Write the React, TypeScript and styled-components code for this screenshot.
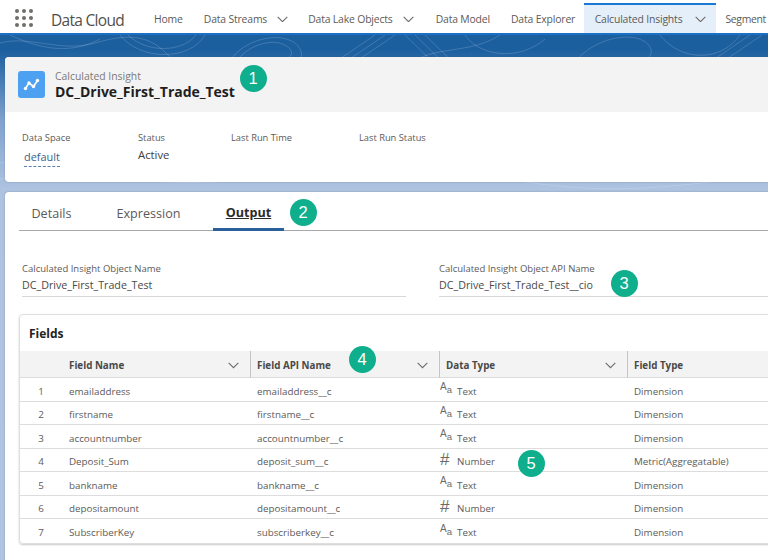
import React from "react";
import styled, { createGlobalStyle } from "styled-components";

const Global = createGlobalStyle`
  html, body { margin: 0; padding: 0; background: #fff; }
  * { box-sizing: border-box; }
`;

const Page = styled.div`
  position: relative;
  width: 768px;
  height: 560px;
  overflow: hidden;
  display: flex;
  flex-direction: column;
  font-family: "Open Sans", "Noto Sans", sans-serif;
  color: #3e3e3c;
  background: linear-gradient(180deg, #1c5f9f 0px, #1c5f9f 50px, #7fa2cf 120px, #aec3e0 190px, #b0c5e1 560px);
`;

const Topo = styled.svg`
  position: absolute;
  left: 0;
  top: 35px;
  width: 768px;
  height: 160px;
  pointer-events: none;
`;

const Nav = styled.header`
  position: relative;
  flex: none;
  height: 35px;
  background: #fff;
  border-bottom: 2px solid #1b6fc4;
  display: flex;
  align-items: stretch;
  white-space: nowrap;
  overflow: hidden;
`;

const Launcher = styled.div`
  width: 18px;
  height: 18px;
  margin: 9px 0 0 15px;
  display: grid;
  grid-template-columns: repeat(3, 4px);
  grid-auto-rows: 4px;
  gap: 3px;
  flex: none;
`;

const Dot = styled.i`
  display: block;
  width: 4px;
  height: 4px;
  border-radius: 50%;
  background: #706e6b;
`;

const AppName = styled.div`
  font-size: 15.5px;
  line-height: 33px;
  padding-top: 4px;
  color: #514f4d;
  margin: 0 19.5px 0 18px;
  letter-spacing: -0.7px;
  flex: none;
`;

const NavItem = styled.div<{ $right?: number; $gap?: number }>`
  flex: none;
  display: flex;
  align-items: center;
  gap: ${(p) => p.$gap ?? 10}px;
  height: 33px;
  padding: 5px ${(p) => p.$right ?? 10.5}px 0 10.5px;
  font-size: 10.4px;
  letter-spacing: -0.16px;
  color: #5c5a58;
`;

const ActiveNavItem = styled(NavItem)`
  height: 30px;
  margin-top: 3px;
  padding: 0 10px 0 11px;
  background: #e5eff9;
  border-top: 2px solid #1b78d4;
`;

const ClippedNavItem = styled(NavItem)`
  padding-left: 9px;
  padding-right: 0;
  letter-spacing: -0.3px;
`;

const Card = styled.section`
  position: relative;
  margin-left: 5px;
  width: 800px;
  background: #fff;
  border-radius: 4px 0 0 4px;
  box-shadow: 0 0 2px rgba(60, 70, 90, 0.35);
  flex: none;
`;

const HighlightCard = styled(Card)`
  margin-top: 22px;
  height: 125px;
`;

const RecordHead = styled.div`
  height: 55px;
  background: #f3f3f3;
  border-radius: 4px 0 0 0;
  display: flex;
  align-items: center;
  padding: 0 0 1px 13px;
  gap: 10px;
`;

const RecordIcon = styled.div`
  width: 27px;
  height: 27px;
  border-radius: 3px;
  background: #4ea1f0;
  display: flex;
  align-items: center;
  justify-content: center;
  flex: none;
`;

const RecordTitle = styled.div`
  display: flex;
  flex-direction: column;
  padding-top: 1px;
`;

const RecordKind = styled.span`
  font-size: 10.4px;
  line-height: 13px;
  color: #7b7977;
`;

const RecordName = styled.span`
  font-size: 14px;
  line-height: 17px;
  font-weight: 700;
  color: #1e1e1e;
  letter-spacing: -0.02px;
`;

const Facts = styled.div`
  display: flex;
  padding: 20px 0 0 17px;
`;

const Fact = styled.div<{ $w: number }>`
  width: ${(p) => p.$w}px;
  flex: none;
`;

const FactLabel = styled.div`
  font-size: 9.3px;
  line-height: 12px;
  color: #5c5a58;
`;

const FactValue = styled.div`
  font-size: 11.3px;
  line-height: 16px;
  margin-top: 3px;
  color: #3e3e3c;
`;

const FactLink = styled.span`
  display: inline-block;
  margin: 0 0 0 2px;
  font-size: 10.9px;
  line-height: 14px;
  color: #3a5f8a;
  padding-bottom: 2px;
  border-bottom: 1px dashed #5b80b0;
`;

const MainCard = styled(Card)`
  margin-top: 10px;
  height: 400px;
  padding: 0 0 0 14px;
`;

const Tabs = styled.nav`
  display: flex;
  height: 39px;
  border-bottom: 1px solid #a8a8a8;
`;

const Tab = styled.div<{ $active?: boolean; $w: number }>`
  width: ${(p) => p.$w}px;
  flex: none;
  height: 39px;
  display: flex;
  align-items: center;
  justify-content: center;
  padding-top: ${(p) => (p.$active ? "5px" : "3px")};
  font-size: 12.6px;
  color: ${(p) => (p.$active ? "#2b2b2b" : "#5c5a58")};
  font-weight: ${(p) => (p.$active ? 700 : 400)};
  text-decoration: ${(p) => (p.$active ? "underline" : "none")};
  border-bottom: ${(p) => (p.$active ? "3px solid #2b5f9c" : "none")};
`;

const FormRow = styled.div`
  display: flex;
  margin: 31px 0 0 3px;
  gap: 33px;
`;

const FormField = styled.div`
  width: 384px;
  height: 35px;
  border-bottom: 1px solid #d8d8d8;
  flex: none;
`;

const WideField = styled(FormField)`
  width: 400px;
`;

const FormLabel = styled.div`
  font-size: 9.5px;
  line-height: 13px;
  color: #5c5a58;
`;

const FormValue = styled.div`
  font-size: 10.7px;
  line-height: 16px;
  margin-top: 2px;
  color: #4a4947;
`;

const FieldsBox = styled.div`
  margin-top: 17px;
  width: 770px;
  border: 1px solid #dedede;
  border-radius: 4px 0 0 4px;
  box-shadow: 0 1px 2px rgba(0, 0, 0, 0.22);
`;

const FieldsTitle = styled.h2`
  margin: 0;
  height: 36px;
  padding: 0 0 0 9px;
  font-size: 12px;
  line-height: 37px;
  font-weight: 700;
  color: #232323;
`;

const Grid = styled.div`
  display: grid;
  grid-template-columns: 42px 188px 189px 188px 1fr;
`;

const HeadCell = styled.div<{ $div?: boolean }>`
  height: 27px;
  background: #f3f3f3;
  border-bottom: 1px solid #dcdcdc;
  border-left: ${(p) => (p.$div ? "1px solid #c4c4c4" : "none")};
  display: flex;
  align-items: center;
  justify-content: space-between;
  padding: 3px 11px 0 ${(p) => (p.$div ? "6px" : "7px")};
  font-size: 9.8px;
  font-weight: 700;
  color: #4a4947;
`;

const Cell = styled.div<{ $num?: boolean; $last?: boolean; $type?: boolean }>`
  height: 23.5px;
  border-bottom: ${(p) => (p.$last ? "none" : "1px solid #dddddd")};
  display: flex;
  align-items: center;
  justify-content: ${(p) => (p.$num ? "center" : "flex-start")};
  gap: 5px;
  padding: 4px 0 0 ${(p) => (p.$num ? "0" : p.$type ? "1px" : "7px")};
  font-size: 9.8px;
  color: #5c5a58;
  white-space: nowrap;
`;

const TypeGlyph = styled.span`
  width: 12px;
  flex: none;
  color: #6d6b69;
  display: flex;
  align-items: baseline;
  position: relative;
  top: -2px;
  font-family: "Liberation Sans", sans-serif;
`;

const AaBig = styled.span`
  font-size: 10px;
  line-height: 10px;
  position: relative;
  top: -2px;
`;

const AaSmall = styled.span`
  font-size: 9.5px;
  line-height: 10px;
  position: relative;
  top: 1px;
`;

const Hash = styled.span`
  font-size: 17px;
  line-height: 14px;
  font-weight: 400;
`;

const Badge = styled.div<{ $x: number; $y: number }>`
  position: absolute;
  left: ${(p) => p.$x - 13.5}px;
  top: ${(p) => p.$y - 13.5}px;
  width: 27px;
  height: 27px;
  border-radius: 50%;
  background: #0fae8c;
  color: #fff;
  font-family: "Liberation Sans", sans-serif;
  font-size: 16.5px;
  display: flex;
  align-items: center;
  justify-content: center;
`;

const Chevron = ({ size = 11, color = "#6f6d6b" }: { size?: number; color?: string }) => (
  <svg width={size} height={size * 0.6} viewBox="0 0 10 6" fill="none" style={{ flex: "none" }}>
    <path d="M0.6 0.7 L5 5.2 L9.4 0.7" stroke={color} strokeWidth="1" />
  </svg>
);

const contours = [
  "M0 8 C30 0 60 18 95 8 S150 0 170 22",
  "M10 0 C40 14 70 20 100 4",
  "M120 0 C140 26 190 26 205 0",
  "M128 0 C146 18 182 18 196 0",
  "M225 34 C240 0 290 -6 300 14 S270 40 235 34",
  "M235 28 C250 6 280 2 290 14 S262 32 240 30",
  "M325 34 L375 0 M335 34 L385 0 M345 34 L395 0",
  "M410 30 C430 10 470 20 500 0",
  "M405 0 L440 34 M415 0 L450 34 M425 0 L460 34",
  "M465 0 C480 22 520 26 545 4",
  "M570 34 C590 0 640 -6 650 12 S610 40 575 34",
  "M660 0 C680 26 720 28 740 0",
  "M700 34 L750 0 M712 34 L762 0",
  "M0 128 C60 118 120 140 190 128 S320 116 400 130 S600 140 768 124",
  "M0 144 C80 132 150 156 250 144 S420 130 520 146 S680 150 768 140",
  "M40 70 C90 50 150 90 210 70 S340 50 420 78 S620 90 768 66",
];

const rows: [string, string, "Text" | "Number", string][] = [
  ["emailaddress", "emailaddress__c", "Text", "Dimension"],
  ["firstname", "firstname__c", "Text", "Dimension"],
  ["accountnumber", "accountnumber__c", "Text", "Dimension"],
  ["Deposit_Sum", "deposit_sum__c", "Number", "Metric(Aggregatable)"],
  ["bankname", "bankname__c", "Text", "Dimension"],
  ["depositamount", "depositamount__c", "Number", "Dimension"],
  ["SubscriberKey", "subscriberkey__c", "Text", "Dimension"],
];

export default function App() {
  return (
    <Page>
      <Global />
      <Topo viewBox="0 0 768 160" fill="none">
        {contours.map((d, i) => (
          <path key={i} d={d} stroke="#ffffff" strokeOpacity={0.16} strokeWidth="1" />
        ))}
      </Topo>
      <Nav>
        <Launcher>
          {Array.from({ length: 9 }).map((_, i) => (
            <Dot key={i} />
          ))}
        </Launcher>
        <AppName>Data Cloud</AppName>
        <NavItem>Home</NavItem>
        <NavItem $right={9.5}>
          Data Streams <Chevron />
        </NavItem>
        <NavItem $right={11.5}>
          Data Lake Objects <Chevron />
        </NavItem>
        <NavItem>Data Model</NavItem>
        <NavItem $right={8.5}>Data Explorer</NavItem>
        <ActiveNavItem $gap={13}>
          Calculated Insights <Chevron />
        </ActiveNavItem>
        <ClippedNavItem>Segment</ClippedNavItem>
      </Nav>

      <HighlightCard>
        <RecordHead>
          <RecordIcon>
            <svg width="21" height="21" viewBox="0 0 21 21" fill="none">
              <path d="M4.5 14.5 L8 9 L12.5 12.5 L16.5 6.5" stroke="#fff" strokeWidth="1.6" />
              <circle cx="4.5" cy="14.5" r="1.7" fill="#fff" />
              <circle cx="8" cy="9" r="1.7" fill="#fff" />
              <circle cx="12.5" cy="12.5" r="1.7" fill="#fff" />
              <circle cx="16.5" cy="6.5" r="1.7" fill="#fff" />
            </svg>
          </RecordIcon>
          <RecordTitle>
            <RecordKind>Calculated Insight</RecordKind>
            <RecordName>DC_Drive_First_Trade_Test</RecordName>
          </RecordTitle>
        </RecordHead>
        <Facts>
          <Fact $w={116}>
            <FactLabel>Data Space</FactLabel>
            <FactLink>default</FactLink>
          </Fact>
          <Fact $w={93}>
            <FactLabel>Status</FactLabel>
            <FactValue>Active</FactValue>
          </Fact>
          <Fact $w={128}>
            <FactLabel>Last Run Time</FactLabel>
          </Fact>
          <Fact $w={120}>
            <FactLabel>Last Run Status</FactLabel>
          </Fact>
        </Facts>
      </HighlightCard>

      <MainCard>
        <Tabs>
          <Tab $w={65}>Details</Tab>
          <Tab $w={129}>Expression</Tab>
          <Tab $w={71} $active>
            Output
          </Tab>
        </Tabs>
        <FormRow>
          <FormField>
            <FormLabel>Calculated Insight Object Name</FormLabel>
            <FormValue>DC_Drive_First_Trade_Test</FormValue>
          </FormField>
          <WideField>
            <FormLabel>Calculated Insight Object API Name</FormLabel>
            <FormValue>DC_Drive_First_Trade_Test__cio</FormValue>
          </WideField>
        </FormRow>
        <FieldsBox>
          <FieldsTitle>Fields</FieldsTitle>
          <Grid>
            <HeadCell />
            <HeadCell>
              Field Name <Chevron />
            </HeadCell>
            <HeadCell $div>
              Field API Name <Chevron />
            </HeadCell>
            <HeadCell $div>
              Data Type <Chevron />
            </HeadCell>
            <HeadCell $div>Field Type</HeadCell>
            {rows.map((r, i) => {
              const last = i === rows.length - 1;
              return (
                <React.Fragment key={r[0]}>
                  <Cell $num $last={last}>{i + 1}</Cell>
                  <Cell $last={last}>{r[0]}</Cell>
                  <Cell $last={last}>{r[1]}</Cell>
                  <Cell $last={last} $type>
                    <TypeGlyph>
                      {r[2] === "Text" ? (
                        <>
                          <AaBig>A</AaBig>
                          <AaSmall>a</AaSmall>
                        </>
                      ) : (
                        <Hash>#</Hash>
                      )}
                    </TypeGlyph>
                    {r[2]}
                  </Cell>
                  <Cell $last={last}>{r[3]}</Cell>
                </React.Fragment>
              );
            })}
          </Grid>
        </FieldsBox>
      </MainCard>

      <Badge $x={253} $y={78}>1</Badge>
      <Badge $x={303} $y={212}>2</Badge>
      <Badge $x={624} $y={283}>3</Badge>
      <Badge $x={362} $y={359}>4</Badge>
      <Badge $x={531} $y={463}>5</Badge>
    </Page>
  );
}
